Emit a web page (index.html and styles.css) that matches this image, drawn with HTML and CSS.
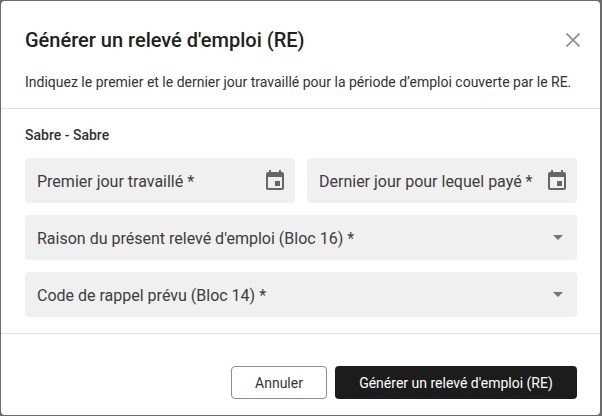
FILE: index.html
```html
<!DOCTYPE html>
<html lang="fr">
<head>
    <meta charset="UTF-8">
    <title>Générer un relevé d'emploi</title>
    <link rel="stylesheet" href="styles.css">
</head>
<body>
    <div class="dialog">
        <div class="header">
            <div class="title-row">
                <h2 class="title">Générer un relevé d'emploi (RE)</h2>
                <svg class="close" viewBox="0 0 14 14" width="14" height="14">
                    <path d="M0.5 0.5L13.5 13.5M13.5 0.5L0.5 13.5" />
                </svg>
            </div>
            <p class="subtitle">Indiquez le premier et le dernier jour travaillé pour la période d’emploi couverte par le RE.</p>
        </div>
        <div class="content">
            <div class="employee">Sabre - Sabre</div>
            <div class="row">
                <div class="field">
                    <span class="label">Premier jour travaillé *</span>
                    <svg class="cal" viewBox="0 0 24 24" width="24" height="24">
                        <path d="M17 12h-5v5h5v-5zM16 1v2H8V1H6v2H5c-1.11 0-1.99.9-1.99 2L3 19c0 1.1.89 2 2 2h14c1.1 0 2-.9 2-2V5c0-1.1-.9-2-2-2h-1V1h-2zm3 18H5V8h14v11z" />
                    </svg>
                </div>
                <div class="field">
                    <span class="label">Dernier jour pour lequel payé *</span>
                    <svg class="cal" viewBox="0 0 24 24" width="24" height="24">
                        <path d="M17 12h-5v5h5v-5zM16 1v2H8V1H6v2H5c-1.11 0-1.99.9-1.99 2L3 19c0 1.1.89 2 2 2h14c1.1 0 2-.9 2-2V5c0-1.1-.9-2-2-2h-1V1h-2zm3 18H5V8h14v11z" />
                    </svg>
                </div>
            </div>
            <div class="field">
                <span class="label">Raison du présent relevé d'emploi (Bloc 16) *</span>
                <span class="arrow"></span>
            </div>
            <div class="field">
                <span class="label">Code de rappel prévu (Bloc 14) *</span>
                <span class="arrow"></span>
            </div>
        </div>
        <div class="actions">
            <button class="btn btn-cancel">Annuler</button>
            <button class="btn btn-primary">Générer un relevé d'emploi (RE)</button>
        </div>
    </div>
</body>
</html>
```

FILE: styles.css
```css
* {
    box-sizing: border-box;
}
body {
    margin: 0;
    width: 602px;
    height: 416px;
    padding: 1px 2px 1px 1px;
    background: #6b6b6b;
    font-family: Roboto, sans-serif;
    color: #212121;
    overflow: hidden;
}
.dialog {
    height: 414px;
    background: #fff;
    border-radius: 4px;
}
.header {
    height: 108px;
    padding: 24px 20px 0 24px;
    border-bottom: 1px solid #e0e0e0;
}
.title-row {
    display: flex;
    justify-content: space-between;
    align-items: center;
    height: 30px;
}
.title {
    margin: 0;
    font-size: 20px;
    font-weight: 500;
    line-height: 30px;
}
.close {
    fill: none;
    stroke: #8f8f8f;
    stroke-width: 1.7;
}
.subtitle {
    margin: 17px 0 0 0;
    font-size: 14px;
    line-height: 20px;
    color: #333;
}
.content {
    height: 225px;
    padding: 18px 23px 0 24px;
    border-bottom: 1px solid #e0e0e0;
}
.employee {
    height: 17px;
    margin-bottom: 14px;
    font-size: 14px;
    font-weight: 500;
    line-height: 17px;
    color: #333;
}
.row {
    display: flex;
    gap: 12px;
}
.field {
    display: flex;
    flex: 1;
    justify-content: space-between;
    align-items: center;
    height: 45px;
    margin-bottom: 12px;
    padding: 0 8px 0 12px;
    background: #f0f0f0;
    border-radius: 4px;
}
.label {
    padding-top: 2px;
    font-size: 16px;
    color: #3d3d3d;
    white-space: nowrap;
}
.cal {
    fill: #666;
}
.arrow {
    width: 0;
    height: 0;
    margin-right: 6px;
    border-top: 5px solid #757575;
    border-left: 5px solid transparent;
    border-right: 5px solid transparent;
}
.actions {
    display: flex;
    justify-content: flex-end;
    gap: 8px;
    padding: 32px 23px 0 24px;
}
.btn {
    height: 33px;
    font-family: Roboto, sans-serif;
    font-size: 14px;
    border-radius: 4px;
}
.btn-cancel {
    width: 96px;
    background: #fff;
    border: 1px solid #8c8c8c;
    color: #333;
}
.btn-primary {
    width: 242px;
    background: #1c1c1c;
    border: none;
    color: #fff;
}
```
